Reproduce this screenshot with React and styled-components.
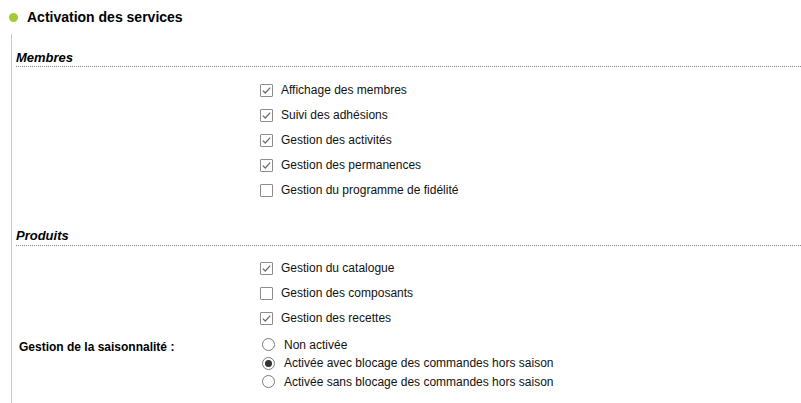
import React from "react";
import styled, { createGlobalStyle } from "styled-components";

const Global = createGlobalStyle`
  html, body { margin: 0; padding: 0; background: #fff; }
  body { font-family: "Liberation Sans", Arial, sans-serif; color: #000; }
`;

const Page = styled.div`
  width: 801px;
  height: 403px;
  overflow: hidden;
`;

const Header = styled.div`
  display: flex;
  align-items: center;
  gap: 9px;
  height: 34px;
  padding-left: 9px;
`;

const Dot = styled.span`
  width: 9px;
  height: 9px;
  border-radius: 50%;
  background: #a8c936;
`;

const Title = styled.h2`
  margin: 0;
  font-size: 14px;
  font-weight: bold;
`;

const Body = styled.div`
  margin-left: 11px;
  border-left: 1px solid #c8c8c8;
  padding-left: 4px;
  padding-top: 16px;
  min-height: 400px;
`;

const SectionTitle = styled.h3`
  margin: 0;
  font-size: 13px;
  font-style: italic;
  font-weight: bold;
  line-height: 16px;
  padding-bottom: ${(p) => p.$pad || 0}px;
  border-bottom: 1px dotted #8a8a8a;
`;

const Section = styled.section`
  margin-bottom: ${(p) => p.$after || 0}px;
`;

const Rows = styled.div`
  display: grid;
  grid-template-columns: 244px 1fr;
  padding-top: ${(p) => p.$top || 0}px;
`;

const FieldLabel = styled.div`
  font-size: 12px;
  font-weight: bold;
  padding-left: 3px;
  padding-top: 2px;
  line-height: 16px;
`;

const Options = styled.div`
  display: flex;
  flex-direction: column;
  gap: ${(p) => p.$gap}px;
`;

const CheckRow = styled.label`
  display: flex;
  align-items: center;
  gap: 8px;
  height: 16px;
  font-size: 12px;
  color: #111;
`;

const Box = styled.span`
  box-sizing: border-box;
  width: 13px;
  height: 13px;
  border: 1px solid #8c8c8c;
  border-radius: 1px;
  background: #fff;
  display: inline-flex;
  align-items: center;
  justify-content: center;
`;

const RadioRow = styled.label`
  display: flex;
  align-items: center;
  gap: 9px;
  height: 16px;
  padding-left: 2px;
  font-size: 12px;
  color: #111;
`;

const Circle = styled.span`
  box-sizing: border-box;
  width: 13px;
  height: 13px;
  border: 1px solid #7a7a7a;
  border-radius: 50%;
  background: #fff;
  display: inline-flex;
  align-items: center;
  justify-content: center;
  &::after {
    content: "";
    width: 7px;
    height: 7px;
    border-radius: 50%;
    background: ${(p) => (p.$on ? "#333" : "transparent")};
  }
`;

const Check = ({ on, children }) => (
  <CheckRow>
    <Box>
      {on && (
        <svg width="11" height="11" viewBox="0 0 11 11">
          <path d="M1.8 5.6 L4.3 8 L9.2 2.6" fill="none" stroke="#6d6d6d" strokeWidth="1.3" />
        </svg>
      )}
    </Box>
    {children}
  </CheckRow>
);

const Radio = ({ on, children }) => (
  <RadioRow>
    <Circle $on={on} />
    {children}
  </RadioRow>
);

export default function App() {
  return (
    <Page>
      <Global />
      <Header>
        <Dot />
        <Title>Activation des services</Title>
      </Header>
      <Body>
        <Section $after={30}>
          <SectionTitle>Membres</SectionTitle>
          <Rows $top={15}>
            <div />
            <Options $gap={9}>
              <Check on>Affichage des membres</Check>
              <Check on>Suivi des adhésions</Check>
              <Check on>Gestion des activités</Check>
              <Check on>Gestion des permanences</Check>
              <Check>Gestion du programme de fidélité</Check>
            </Options>
          </Rows>
        </Section>
        <Section>
          <SectionTitle $pad={1}>Produits</SectionTitle>
          <Rows $top={14}>
            <div />
            <Options $gap={9}>
              <Check on>Gestion du catalogue</Check>
              <Check>Gestion des composants</Check>
              <Check on>Gestion des recettes</Check>
            </Options>
          </Rows>
          <Rows $top={10.5}>
            <FieldLabel>Gestion de la saisonnalité :</FieldLabel>
            <Options $gap={2.5}>
              <Radio>Non activée</Radio>
              <Radio on>Activée avec blocage des commandes hors saison</Radio>
              <Radio>Activée sans blocage des commandes hors saison</Radio>
            </Options>
          </Rows>
        </Section>
      </Body>
    </Page>
  );
}
